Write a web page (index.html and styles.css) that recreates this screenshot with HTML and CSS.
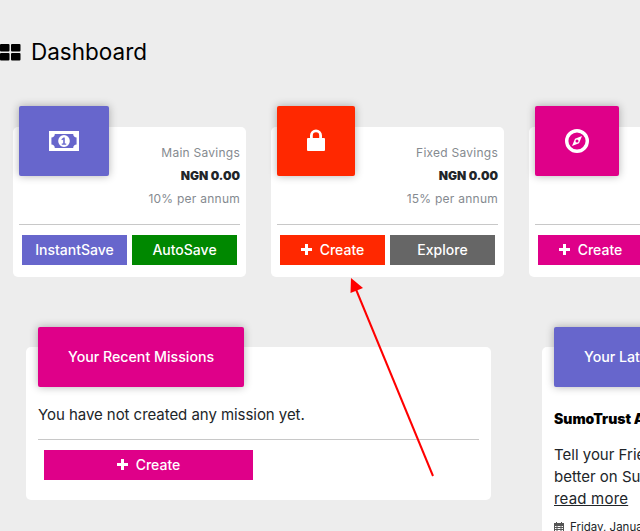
FILE: index.html
```html
<!DOCTYPE html>
<html lang="en">
<head>
<meta charset="utf-8">
<title>Dashboard</title>
<link rel="stylesheet" href="styles.css">
</head>
<body>
<main class="page">
  <h1 class="title">
    <svg class="title-icon" viewBox="0 0 21 17" aria-hidden="true"><rect x="0" y="0" width="9.5" height="7.5" rx="1"/><rect x="11" y="0" width="9.5" height="7.5" rx="1"/><rect x="0" y="9" width="9.5" height="7.5" rx="1"/><rect x="11" y="9" width="9.5" height="7.5" rx="1"/></svg>
    <span>Dashboard</span>
  </h1>

  <section class="savings">
    <article class="card">
      <div class="badge purple">
        <svg class="ico-money" viewBox="0 0 31 20" preserveAspectRatio="none" aria-hidden="true"><path fill-rule="evenodd" d="M0 0H31V20H0ZM6 3C6 5 4.5 6.5 2.5 6.5V13.5C4.500 13.500 6 15 6 17H25C25 15 26.500 13.500 28.500 13.500V6.500C26.500 6.500 25 5 25 3Z"/><path fill-rule="evenodd" d="M15.500 4A6 6 0 1 0 15.500 16A6 6 0 1 0 15.500 4ZM16.300 6.500V12.500H17.800V13.800H13.200V12.500H14.700V8.500L13.400 9.300L12.800 8.200L15 6.500Z"/></svg>
      </div>
      <div class="info">
        <p class="label">Main Savings</p>
        <p class="amount">NGN 0.00</p>
        <p class="label">10% per annum</p>
      </div>
      <div class="actions">
        <a class="btn purple">InstantSave</a>
        <a class="btn green">AutoSave</a>
      </div>
    </article>

    <article class="card">
      <div class="badge red">
        <svg class="ico-lock" viewBox="0 0 18 22" aria-hidden="true"><path d="M3 9V6.500A6 6 0 0 1 15 6.500V9H17A1 1 0 0 1 18 10V21A1 1 0 0 1 17 22H1A1 1 0 0 1 0 21V10A1 1 0 0 1 1 9ZM5.800 9H12.200V6.500A3.200 3.200 0 0 0 5.800 6.500Z"/></svg>
      </div>
      <div class="info">
        <p class="label">Fixed Savings</p>
        <p class="amount">NGN 0.00</p>
        <p class="label">15% per annum</p>
      </div>
      <div class="actions">
        <a class="btn red"><svg class="ico-plus" viewBox="0 0 11 11" aria-hidden="true"><path d="M4 0H7V4H11V7H7V11H4V7H0V4H4Z"/></svg>Create</a>
        <a class="btn grey">Explore</a>
      </div>
    </article>

    <article class="card">
      <div class="badge magenta">
        <svg class="ico-compass" viewBox="0 0 24 24" aria-hidden="true"><path fill-rule="evenodd" d="M12 0A12 12 0 1 0 12 24A12 12 0 1 0 12 0ZM12 3.400A8.600 8.600 0 1 1 12 20.600A8.600 8.600 0 1 1 12 3.400ZM17 7L10 9.800L7 17L14 14.200ZM12 10.500A1.500 1.500 0 1 1 12 13.500A1.500 1.500 0 1 1 12 10.500Z"/></svg>
      </div>
      <div class="info"></div>
      <div class="actions">
        <a class="btn magenta"><svg class="ico-plus" viewBox="0 0 11 11" aria-hidden="true"><path d="M4 0H7V4H11V7H7V11H4V7H0V4H4Z"/></svg>Create</a>
        <span class="btn grey"></span>
      </div>
    </article>
  </section>

  <section class="lower">
    <article class="panel panel-missions">
      <h2 class="panel-head magenta">Your Recent Missions</h2>
      <p class="empty">You have not created any mission yet.</p>
      <div class="panel-foot">
        <a class="btn magenta btn-wide"><svg class="ico-plus" viewBox="0 0 11 11" aria-hidden="true"><path d="M4 0H7V4H11V7H7V11H4V7H0V4H4Z"/></svg>Create</a>
      </div>
    </article>

    <article class="panel panel-news">
      <h2 class="panel-head purple">Your Latest News</h2>
      <h3 class="news-title">SumoTrust App</h3>
      <p class="news-text">Tell your Friends about us<br>better on SumoTrust<br><a class="more">read more</a></p>
      <p class="news-date">
        <svg class="ico-cal" viewBox="0 0 10 10" aria-hidden="true"><path fill-rule="evenodd" d="M2 0H3V1H7V0H8V1H10V10H0V1H2ZM1 4V5H2.500V4ZM3.500 4V5H6.500V4ZM7.500 4V5H9V4ZM1 6V7H2.500V6ZM3.500 6V7H6.500V6ZM7.500 6V7H9V6ZM1 8V9H2.500V8ZM3.500 8V9H6.500V8ZM7.500 8V9H9V8Z"/></svg>
        Friday, January
      </p>
    </article>
  </section>

  <svg class="arrow" viewBox="0 0 640 531" aria-hidden="true">
    <line x1="433" y1="476" x2="355" y2="287"/>
    <polygon points="351,278 350.500,293 363,288"/>
  </svg>
</main>
</body>
</html>
```
FILE: styles.css
```css
* { box-sizing: border-box; }
html, body { margin: 0; height: 100%; }
body {
  background: #ededed;
  font-family: Inter, "Open Sans", sans-serif;
  color: #212529;
  overflow: hidden;
}
.page {
  position: relative;
  width: 640px;
  height: 531px;
  overflow: hidden;
  padding-top: 38px;
}
p, h1, h2, h3 { margin: 0; }
.title {
  display: flex;
  align-items: center;
  gap: 10px;
  height: 28px;
  font-size: 22.5px;
  font-weight: 400;
  color: #000;
}
.title span { margin-bottom: 2px; }
.title-icon { width: 21px; height: 17px; fill: #000; }

.savings {
  display: flex;
  gap: 25px;
  margin: 40px 0 0 13px;
  width: 1000px;
}
.card {
  flex: none;
  width: 233px;
  height: 150px;
  margin-top: 21px;
  padding: 0 6px;
  background: #fff;
  border-radius: 5px;
}
.badge {
  display: inline-flex;
  align-items: center;
  justify-content: center;
  height: 70px;
  padding: 0 30px;
  margin-top: -21px;
  border-radius: 2px;
  box-shadow: 0 0 8px rgba(0, 0, 0, .3);
  vertical-align: top;
}
.ico-money { width: 30px; height: 20px; fill: #fff; }
.ico-lock { width: 18px; height: 22px; margin-bottom: 2px; fill: #fff; }
.ico-compass { width: 24px; height: 24px; fill: #fff; }

.info {
  display: flex;
  flex-direction: column;
  align-items: flex-end;
  gap: 5px;
  margin-top: -32px;
  height: 80px;
}
.label, .amount {
  height: 18px;
  line-height: 18px;
  font-size: 12px;
  white-space: nowrap;
}
.label { color: #858a90; letter-spacing: .25px; }
.amount { color: #212529; font-weight: 900; }
.actions {
  display: flex;
  gap: 5px;
  padding: 10px 3px 0;
  border-top: 1px solid #c8c8c8;
}
.btn {
  display: flex;
  flex: 1;
  align-items: center;
  justify-content: center;
  height: 30px;
  padding-bottom: 2px;
  color: #fff;
  font-size: 14px;
  font-weight: 500;
  white-space: nowrap;
}
.ico-plus { width: 11px; height: 11px; margin-right: 8px; fill: #fff; }

.purple { background: #6766cc; }
.green { background: #008800; }
.red { background: #ff2800; }
.grey { background: #666; }
.magenta { background: #df0089; }

.lower {
  display: flex;
  gap: 51px;
  margin: 50px 0 0 26px;
  width: 1100px;
}
.panel {
  flex: none;
  width: 465px;
  height: 153px;
  margin-top: 20px;
  padding: 0 12px;
  background: #fff;
  border-radius: 5px;
}
.panel-news { height: 300px; }
.panel-head {
  display: flex;
  align-items: center;
  width: fit-content;
  height: 60px;
  padding: 0 30px 2px;
  margin-top: -20px;
  color: #fff;
  font-size: 14.2px;
  font-weight: 500;
  white-space: nowrap;
  border-radius: 2px;
  box-shadow: 0 0 8px rgba(0, 0, 0, .3);
}
.empty {
  margin-top: 18px;
  height: 20px;
  line-height: 20px;
  font-size: 15px;
  letter-spacing: -.05px;
  white-space: nowrap;
}
.panel-foot {
  margin-top: 14px;
  padding: 10px 6px 0;
  border-top: 1px solid #c8c8c8;
}
.btn-wide { width: 209px; flex: none; }
.news-title {
  margin-top: 22px;
  height: 20px;
  line-height: 20px;
  font-size: 14px;
  font-weight: 900;
  color: #000;
}
.news-text {
  margin-top: 15px;
  font-size: 15px;
  line-height: 22px;
  white-space: nowrap;
}
.more { text-decoration: underline; letter-spacing: .2px; }
.news-date {
  display: flex;
  align-items: center;
  gap: 6px;
  margin-top: 9px;
  font-size: 11.5px;
  line-height: 16px;
  white-space: nowrap;
}
.ico-cal { width: 10px; height: 10px; fill: #555; }

.arrow {
  position: absolute;
  inset: 0;
  width: 640px;
  height: 531px;
  pointer-events: none;
}
.arrow line { stroke: #ff0000; stroke-width: 2; }
.arrow polygon { fill: #ff0000; }
```
